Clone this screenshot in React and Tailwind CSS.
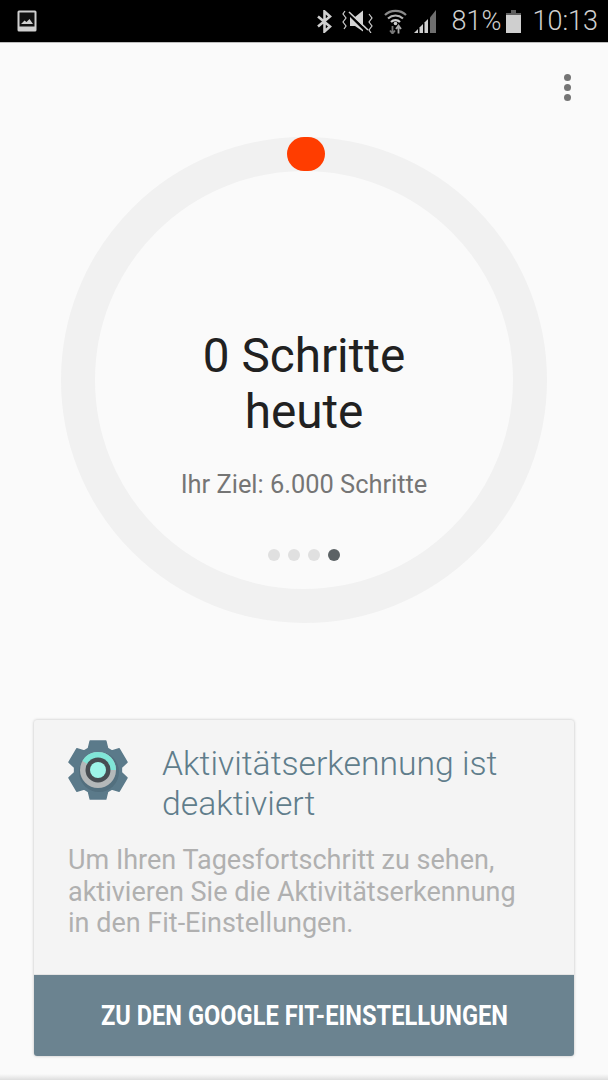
import React from 'react';

const ROBOTO = 'font-["Roboto",sans-serif]';

const PictureIcon = () => (
  <svg width="20" height="22" viewBox="0 0 20 22">
    <rect x="0.5" y="0.5" width="19" height="21" rx="1.5" fill="#cfcfcf" />
    <rect x="2.5" y="2.5" width="15" height="14" fill="#111" />
    <path d="M4 14 L7.5 10.5 L9.5 12 L12.5 9 L16 14 Z" fill="#cfcfcf" />
  </svg>
);

const BluetoothIcon = () => (
  <svg width="15" height="23" viewBox="0 0 15 23" fill="none" stroke="#cfcfcf" strokeWidth="2.6">
    <path d="M1 6.5 L13 16.5 L7.5 21.5 V1.5 L13 6.5 L1 16.5" />
  </svg>
);

const MuteVibrateIcon = () => (
  <svg width="32" height="23" viewBox="0 0 32 23" fill="none">
    <path d="M8 7 H13 L21 0.5 V21.5 L13 16 H8 Z" fill="#d4d4d4" />
    <path d="M6 3 L25 22" stroke="#000" strokeWidth="2.6" />
    <path d="M7 2 L26 20" stroke="#d4d4d4" strokeWidth="1.6" />
    <path d="M3 1 L1 4 L4 8 L1 12 L4 16 L2 19" stroke="#cfcfcf" strokeWidth="1.2" />
    <path d="M27 4 L30 8 L27 12 L30 16 L27 20 L29 23" stroke="#cfcfcf" strokeWidth="1.2" />
  </svg>
);

const WifiIcon = () => (
  <svg width="23" height="25" viewBox="0 0 23 25" fill="none">
    <path d="M1 6 C6.5 0.5 16.5 0.5 22 6" stroke="#8a8a8a" strokeWidth="2.2" />
    <path d="M4 9.5 C8.5 5.5 14.5 5.5 19 9.5" stroke="#b5b5b5" strokeWidth="2.2" />
    <path d="M7 13 C9.5 10.5 13.5 10.5 16 13" stroke="#cfcfcf" strokeWidth="2.2" />
    <circle cx="11.5" cy="14.5" r="1.8" fill="#cfcfcf" />
    <path d="M8.5 17 V24.5 M6 21.5 L8.5 24.5 L11 21.5" stroke="#777" strokeWidth="1.8" />
    <path d="M14.5 24.5 V17 M12 20 L14.5 16.5 L17 20" stroke="#aaa" strokeWidth="1.8" />
  </svg>
);

const SignalIcon = () => (
  <svg width="22" height="23" viewBox="0 0 22 23">
    <path d="M0 23 L4 19 V23 Z" fill="#cfcfcf" />
    <path d="M5.5 17.5 L9 14 V23 H5.5 Z" fill="#cfcfcf" />
    <path d="M10.5 12.5 L14 9 V23 H10.5 Z" fill="#cfcfcf" />
    <path d="M16 7.5 L22 0 V23 H16 Z" fill="#6e6e6e" />
  </svg>
);

const BatteryIcon = () => (
  <svg width="15" height="23" viewBox="0 0 15 23">
    <path d="M5 0 H10 V3 H15 V23 H0 V3 H5 Z" fill="#cfcfcf" />
    <path d="M5 0 H10 V3 H15 V5 H0 V3 H5 Z" fill="#5f5f5f" />
  </svg>
);

// six teeth, one pointing straight up
const gearPath = () => {
  const pt = (r, deg) => {
    const a = ((deg - 90) * Math.PI) / 180;
    return `${(30 + r * Math.cos(a)).toFixed(1)} ${(31 + r * Math.sin(a)).toFixed(1)}`;
  };
  let d = '';
  for (let i = 0; i < 6; i++) {
    const c = i * 60;
    d += `${i === 0 ? 'M' : 'L'}${pt(23.5, c - 24)} L${pt(30, c - 15)} L${pt(30, c + 15)} L${pt(23.5, c + 24)} `;
  }
  return d + 'Z';
};

const GearIcon = () => (
  <svg width="60" height="62" viewBox="0 0 60 62">
    <path d={gearPath()} fill="#5b7a8a" stroke="#5b7a8a" strokeWidth="1.5" strokeLinejoin="round" />
    <circle cx="31" cy="33" r="20" fill="#4a6472" opacity="0.5" />
    <circle cx="30" cy="31" r="18" fill="#b4b8b9" />
    <path d="M14.4 22 A18 18 0 0 1 48 31 H30 Z" fill="#80e6d8" />
    <circle cx="30" cy="31" r="12.5" fill="#474d52" />
    <circle cx="30" cy="31" r="8" fill="#9ef5e8" />
  </svg>
);

const App = () => {
  return (
    <div className={`${ROBOTO} w-[608px] h-[1080px] overflow-hidden flex flex-col bg-[#fafafa]`}>
      {/* status bar */}
      <div className="h-[43px] bg-black flex items-center pl-[17px] pr-[10px] border-b border-[#bdbdbd]">
        <PictureIcon />
        <div className="ml-auto flex items-center">
          <BluetoothIcon />
          <div className="ml-[10px]"><MuteVibrateIcon /></div>
          <div className="ml-[10px]"><WifiIcon /></div>
          <div className="ml-[7px]"><SignalIcon /></div>
          <span className="ml-[16px] text-[27px] font-light leading-none text-[#d0d0d0]">81%</span>
          <div className="ml-[5px]"><BatteryIcon /></div>
          <span className="ml-[11px] text-[27px] font-light leading-none text-[#d0d0d0]">10:13</span>
        </div>
      </div>

      {/* menu */}
      <div className="flex justify-end pt-[31px] pr-[37px]">
        <div className="flex flex-col gap-[3px]">
          <div className="w-[7px] h-[7px] rounded-full bg-[#757575]" />
          <div className="w-[7px] h-[7px] rounded-full bg-[#757575]" />
          <div className="w-[7px] h-[7px] rounded-full bg-[#757575]" />
        </div>
      </div>

      {/* step ring */}
      <div className="mt-[36px] ml-[61px] relative w-[486px] h-[486px] rounded-full border-[34px] border-[#f1f1f1] flex flex-col items-center text-center">
        <div className="absolute top-[-34px] left-[192px] w-[38px] h-[34px] rounded-full bg-[#ff3d00]" />
        <div className="mt-[157px] text-[47.7px] leading-[56px] text-[#212121]">
          0 Schritte
          <br />
          heute
        </div>
        <div className="mt-[28px] text-[25.4px] leading-[32px] text-[#757575]">Ihr Ziel: 6.000 Schritte</div>
        <div className="mt-[49px] flex gap-[8px]">
          <div className="w-[12px] h-[12px] rounded-full bg-[#e0e0e0]" />
          <div className="w-[12px] h-[12px] rounded-full bg-[#e0e0e0]" />
          <div className="w-[12px] h-[12px] rounded-full bg-[#e0e0e0]" />
          <div className="w-[12px] h-[12px] rounded-full bg-[#5c6265]" />
        </div>
      </div>

      {/* activity card */}
      <div className="mt-[97px] mx-[34px] rounded-[3px] bg-[#f4f4f4] shadow-[0_0_3px_rgba(0,0,0,0.25)] overflow-hidden">
        <div className="h-[255px] pl-[34px] pt-[19px] border-b border-[#e4e4e4]">
          <div className="flex">
            <GearIcon />
            <div className="ml-[34px] mt-[5px] text-[33.7px] leading-[40px] font-light text-[#607d8b]">
              Aktivitätserkennung ist
              <br />
              deaktiviert
            </div>
          </div>
          <div className="mt-[21px] text-[27px] leading-[31.5px] whitespace-nowrap text-[#b0b0b0]">
            Um Ihren Tagesfortschritt zu sehen,
            <br />
            aktivieren Sie die Aktivitätserkennung
            <br />
            in den Fit-Einstellungen.
          </div>
        </div>
        <div className="h-[81px] pt-[1px] bg-[#6b8390] flex items-center justify-center">
          <span className="whitespace-nowrap text-[27.8px] font-bold text-white scale-x-[0.85]">
            ZU DEN GOOGLE FIT-EINSTELLUNGEN
          </span>
        </div>
      </div>

      {/* bottom edge */}
      <div className="mt-auto h-[6px] bg-gradient-to-b from-[#fafafa] to-[#dedede]" />
    </div>
  );
};

export default App;
